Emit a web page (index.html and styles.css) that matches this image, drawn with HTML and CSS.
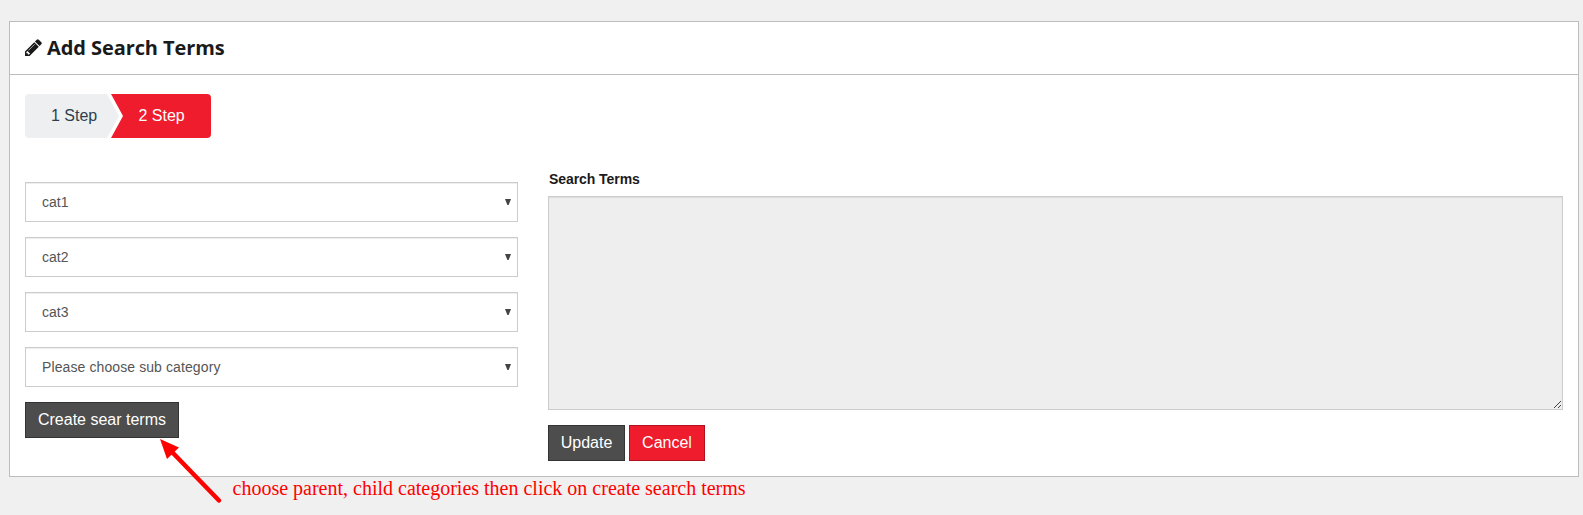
FILE: index.html
```html
<!DOCTYPE html>
<html lang="en">
<head>
<meta charset="utf-8">
<title>Add Search Terms</title>
<link rel="stylesheet" href="styles.css">
</head>
<body>
<main class="panel">
  <header class="panel-header">
    <svg class="pencil" viewBox="0 0 1536 1536" aria-hidden="true"><path d="M363 1408l91-91-235-235-91 91v107h128v128h107zM886 480q0-22-22-22-10 0-17 7l-542 542q-7 7-7 17 0 22 22 22 10 0 17-7l542-542q7-7 7-17zM832 288l416 416-832 832H0v-416zM1515 384q0 53-37 90l-166 166-416-416 166-165q36-38 90-38 53 0 91 38l235 234q37 39 37 91z"/></svg>
    <h1 class="title">Add Search Terms</h1>
  </header>
  <div class="panel-body">
    <nav class="steps">
      <span class="step step-first">1 Step</span>
      <span class="step step-active">2 Step</span>
    </nav>
    <div class="columns">
      <form class="categories">
        <div class="select"><span>cat1</span><i class="caret"></i></div>
        <div class="select"><span>cat2</span><i class="caret"></i></div>
        <div class="select"><span>cat3</span><i class="caret"></i></div>
        <div class="select select-empty"><span>Please choose sub category</span><i class="caret"></i></div>
        <button type="button" class="btn btn-create">Create sear terms</button>
      </form>
      <form class="terms">
        <label class="label" for="terms">Search Terms</label>
        <div class="textarea" id="terms">
          <svg class="grip" viewBox="0 0 7 7" shape-rendering="crispEdges" aria-hidden="true"><path d="M0 6h1v1H0zM1 5h1v1H1zM2 4h1v1H2zM3 3h1v1H3zM4 2h1v1H4zM5 1h1v1H5zM6 0h1v1H6zM4 6h1v1H4zM5 5h1v1H5zM6 4h1v1H6z"/></svg>
        </div>
        <div class="actions">
          <button type="button" class="btn btn-update">Update</button>
          <button type="button" class="btn btn-cancel">Cancel</button>
        </div>
      </form>
    </div>
  </div>
</main>
<svg class="arrow" viewBox="0 0 64 68" aria-hidden="true"><path class="arrow-line" d="M12 13L59 61.500"/><path class="arrow-head" d="M0 0L19 8.500L7 20z"/></svg>
<p class="note">choose parent, child categories then click on create search terms</p>
</body>
</html>
```

FILE: styles.css
```css
* { box-sizing: border-box; }

body {
  margin: 0;
  height: 515px;
  padding: 21px 4px 0 9px;
  overflow: hidden;
  background: #f0f0f0;
  font-family: "Liberation Sans", Arial, sans-serif;
}

.panel {
  height: 456px;
  background: #fff;
  border: 1px solid #bdbdbd;
}

.panel-header {
  display: flex;
  align-items: center;
  height: 53px;
  padding: 0 15px;
  border-bottom: 1px solid #bdbdbd;
  color: #1a1a1a;
}

.pencil { width: 17px; height: 17px; margin: -1px 5px 0 0; fill: #1a1a1a; }

.title {
  margin: 0;
  font: 700 20px/30px "Open Sans", sans-serif;
  letter-spacing: -.08px;
}

.panel-body { padding: 19px 15px 0; }

.steps { display: flex; height: 44px; }

.step {
  height: 44px;
  font-size: 16px;
  line-height: 44px;
}

.step-first {
  width: 94px;
  padding-left: 26px;
  background: #edeff0;
  color: #2c3f4c;
  border-radius: 4px 0 0 4px;
  clip-path: polygon(0 0, 82px 0, 94px 50%, 82px 100%, 0 100%);
}

.step-active {
  width: 100px;
  margin-left: -8px;
  padding-left: 27.5px;
  background: #ee1c2c;
  color: #fff;
  border-radius: 0 4px 4px 0;
  clip-path: polygon(0 0, 100% 0, 100% 100%, 0 100%, 12px 50%);
}

.columns { display: flex; gap: 30px; }

.categories {
  display: flex;
  flex-direction: column;
  align-items: flex-start;
  gap: 15px;
  width: 493px;
  padding-top: 44px;
}

.select {
  display: flex;
  align-items: center;
  justify-content: space-between;
  width: 100%;
  height: 40px;
  padding: 0 6px 0 16px;
  border: 1px solid #ccc;
  box-shadow: inset 0 1px 1px rgba(0, 0, 0, .075);
  background: #fff;
  color: #555;
  font-size: 14px;
}

.select-empty { letter-spacing: .1px; }

.caret {
  width: 6px;
  height: 6px;
  background: #444;
  clip-path: polygon(0 0, 100% 0, 60% 100%, 40% 100%);
}

.terms { flex: 1; padding-top: 32px; }

.label {
  display: block;
  height: 26px;
  padding-left: 1px;
  color: #1a1a1a;
  font-size: 14px;
  font-weight: 700;
  line-height: 18px;
  letter-spacing: -.07px;
}

.textarea {
  display: flex;
  align-items: flex-end;
  justify-content: flex-end;
  height: 214px;
  padding: 1px;
  border: 1px solid #ccc;
  box-shadow: inset 0 1px 1px rgba(0, 0, 0, .075);
  background: #eee;
}

.grip { width: 7px; height: 7px; fill: #444; }

.actions { display: flex; gap: 4px; margin-top: 15px; }

.btn {
  height: 36px;
  padding: 0;
  border: 1px solid #333;
  background: #4d4d4d;
  color: #fff;
  font: 16px "Liberation Sans", Arial, sans-serif;
  white-space: nowrap;
}

.btn-create { width: 154px; }
.btn-update { width: 77px; }
.btn-cancel { width: 76px; background: #ee1c2c; border-color: #b01220; }

/* Annotation laid over the panel */
.arrow {
  position: absolute;
  left: 160px;
  top: 439px;
  width: 64px;
  height: 68px;
}

.arrow-line { stroke: #f00; stroke-width: 4.500; stroke-linecap: round; }
.arrow-head { fill: #f00; }

.note {
  position: absolute;
  left: 232.5px;
  top: 476px;
  margin: 0;
  color: #f00;
  font: 20px/24px "Liberation Serif", "Times New Roman", serif;
  white-space: nowrap;
}
```
